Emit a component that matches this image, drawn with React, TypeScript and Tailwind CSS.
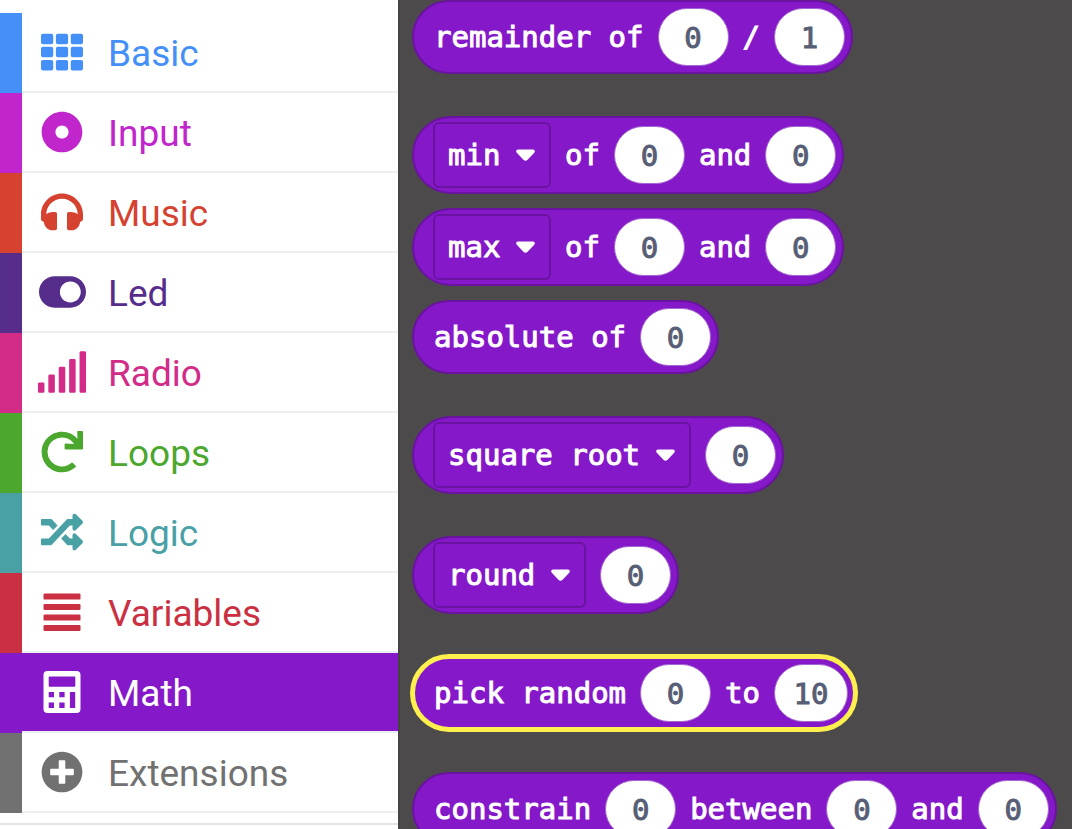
import { useState } from "react";
import type { ComponentType, ReactNode } from "react";
import { FaTh, FaDotCircle, FaToggleOn, FaSignal, FaRedo, FaRandom, FaPlusCircle } from "react-icons/fa";

type IconProps = { className?: string };

function Headphones({ className }: IconProps) {
  return (
    <svg aria-hidden="true" viewBox="0 -2.5 42 42" fill="currentColor" className={className}>
      <path d="M21 0C9.4 0 0 9.4 0 21V25.5C0 26.8.8 27.6 2.9 28.4C3.3 33 7 36.7 11.5 36.7H14.3Q16 36.7 16 35V20.2Q16 18.4 14.3 18.4H12C9.5 18.4 7.2 19.2 5.3 20.8C5.4 12.2 12.4 5.3 21 5.3C29.6 5.3 36.6 12.2 36.7 20.8C34.8 19.2 32.5 18.4 30 18.4H27.7Q26 18.4 26 20.2V35Q26 36.7 27.7 36.7H30.5C35 36.7 38.7 33 39.1 28.4C41.2 27.6 42 26.8 42 25.5V21C42 9.4 32.6 0 21 0Z" />
    </svg>
  );
}

function Lines({ className }: IconProps) {
  return (
    <svg aria-hidden="true" viewBox="-2.5 0 42 42" fill="currentColor" className={className}>
      <rect y="2.6" width="37" height="6" rx="1.2" />
      <rect y="13" width="37" height="6" rx="1.2" />
      <rect y="23.6" width="37" height="6" rx="1.2" />
      <rect y="34" width="37" height="6" rx="1.2" />
    </svg>
  );
}

function Calculator({ className }: IconProps) {
  return (
    <svg aria-hidden="true" viewBox="-2.5 0 42 42" fill="currentColor" className={className}>
      <path
        fillRule="evenodd"
        d="M4 0H33Q37 0 37 4V38Q37 42 33 42H4Q0 42 0 38V4Q0 0 4 0ZM6 5.5Q5.2 5.5 5.2 6.3V15Q5.2 15.8 6 15.8H31Q31.8 15.8 31.8 15V6.3Q31.8 5.5 31 5.5ZM5.2 21H10.5V26.3H5.2ZM15.8 21H21.1V26.3H15.8ZM5.2 31.6H10.5V36.9H5.2ZM15.8 31.6H21.1V36.9H15.8ZM26.4 21H31.7V36.9H26.4Z"
      />
    </svg>
  );
}

type Category = {
  name: string;
  icon: ComponentType<IconProps>;
  bar: string;
  text: string;
  size?: string;
};

const categories: Category[] = [
  { name: "Basic", icon: FaTh, bar: "border-[#458ff8]", text: "text-[#458ff8]" },
  { name: "Input", icon: FaDotCircle, bar: "border-[#c026cb]", text: "text-[#c026cb]" },
  { name: "Music", icon: Headphones, bar: "border-[#d54230]", text: "text-[#d54230]" },
  { name: "Led", icon: FaToggleOn, bar: "border-[#562d8b]", text: "text-[#562d8b]", size: "h-[42px] w-[47px]" },
  { name: "Radio", icon: FaSignal, bar: "border-[#d22b88]", text: "text-[#d22b88]", size: "h-[42px] w-[52px]" },
  { name: "Loops", icon: FaRedo, bar: "border-[#4ca72e]", text: "text-[#4ca72e]" },
  { name: "Logic", icon: FaRandom, bar: "border-[#49a1a6]", text: "text-[#49a1a6]" },
  { name: "Variables", icon: Lines, bar: "border-[#ca3041]", text: "text-[#ca3041]" },
  { name: "Math", icon: Calculator, bar: "border-[#8518c8]", text: "text-[#8518c8]" },
  { name: "Extensions", icon: FaPlusCircle, bar: "border-[#717171]", text: "text-[#717171]" },
];

function Toolbox() {
  const [selected, setSelected] = useState("Math");
  return (
    <nav className="w-[398px] shrink-0 bg-white pt-[13px] font-[Roboto,sans-serif]">
      <ul className="border-b-2 border-[#e4e4e4] pb-2.5">
        {categories.map(({ name, icon: Icon, bar, text, size = "size-[42px]" }) => {
          const active = name === selected;
          return (
            <li key={name} className={`border-l-[22px] ${bar}`}>
              <button
                type="button"
                onClick={() => setSelected(name)}
                className={`flex h-20 w-full items-center border-b-2 border-[#ecf0f1] bg-clip-padding pl-3.5 text-left text-[37px] ${
                  active ? "bg-[#8518c8] text-white" : text
                }`}
              >
                <span className="flex w-[52px] shrink-0 justify-center">
                  <Icon className={`shrink-0 ${size}`} />
                </span>
                <span className="pt-1 pl-5">{name}</span>
              </button>
            </li>
          );
        })}
      </ul>
    </nav>
  );
}

function Block({ children, tall, selected }: { children: ReactNode; tall?: boolean; selected?: boolean }) {
  return (
    <div
      className={`flex w-max items-center gap-3.5 rounded-full border-2 border-[#6a13a0] bg-[#8518c8] pr-1.5 ${
        tall ? "h-[78px] pl-[19px]" : "h-[74px] pl-5"
      } ${selected ? "outline-[5px] outline-offset-[-3px] outline-[#fff04d]" : ""}`}
    >
      {children}
    </div>
  );
}

function Word({ children }: { children: ReactNode }) {
  return <span className="pt-0.5">{children}</span>;
}

function Value({ label, value, wide }: { label: string; value: string; wide?: boolean }) {
  return (
    <input
      type="text"
      aria-label={label}
      defaultValue={value}
      className={`h-[58px] rounded-full border border-[#a566cf] bg-white pt-0.5 text-center text-[#575e75] ${
        wide ? "w-[74px]" : "w-[71px]"
      }`}
    />
  );
}

function Choice({ label, value, options }: { label: string; value: string; options: string[] }) {
  return (
    <div className="relative flex items-center">
      <select
        aria-label={label}
        defaultValue={value}
        className="h-[66px] appearance-none rounded-md border-2 border-[#6a13a0] bg-[#8518c8] pt-0.5 pr-12 pl-[13px] text-white"
      >
        {options.map((option) => (
          <option key={option}>{option}</option>
        ))}
      </select>
      <svg
        aria-hidden="true"
        viewBox="0 0 19 13"
        className="pointer-events-none absolute right-4 h-[13px] w-[19px] fill-white"
      >
        <path d="M2 0.5H17C18.8 0.5 19.4 2.6 18.2 3.8L11.6 10.8C10.3 12.1 8.7 12.1 7.4 10.8L0.8 3.8C-0.4 2.6 0.2 0.5 2 0.5Z" />
      </svg>
    </div>
  );
}

export default function App() {
  return (
    <div className="flex h-screen overflow-hidden bg-white">
      <Toolbox />
      <main className="min-w-0 flex-1 overflow-hidden border-l-2 border-[#454444] bg-[#4c4a4a] pl-3 font-['DejaVu_Sans_Mono',monospace] text-[29px] text-white [-webkit-text-stroke:1px]">
        <div className="flex flex-col gap-[42px]">
          <Block>
            <Word>remainder of</Word>
            <Value label="dividend" value="0" />
            <Word>/</Word>
            <Value label="divisor" value="1" />
          </Block>
          <div className="flex flex-col gap-3.5">
            <Block tall>
              <Choice label="operation" value="min" options={["min", "max"]} />
              <Word>of</Word>
              <Value label="first value" value="0" />
              <Word>and</Word>
              <Value label="second value" value="0" />
            </Block>
            <Block tall>
              <Choice label="operation" value="max" options={["min", "max"]} />
              <Word>of</Word>
              <Value label="first value" value="0" />
              <Word>and</Word>
              <Value label="second value" value="0" />
            </Block>
            <Block>
              <Word>absolute of</Word>
              <Value label="number" value="0" />
            </Block>
          </div>
          <Block tall>
            <Choice label="function" value="square root" options={["square root"]} />
            <Value label="number" value="0" />
          </Block>
          <Block tall>
            <Choice label="rounding" value="round" options={["round"]} />
            <Value label="number" value="0" />
          </Block>
          <Block selected>
            <Word>pick random</Word>
            <Value label="lowest" value="0" />
            <Word>to</Word>
            <Value label="highest" value="10" wide />
          </Block>
          <Block>
            <Word>constrain</Word>
            <Value label="number" value="0" />
            <Word>between</Word>
            <Value label="low" value="0" />
            <Word>and</Word>
            <Value label="high" value="0" />
          </Block>
        </div>
      </main>
    </div>
  );
}
